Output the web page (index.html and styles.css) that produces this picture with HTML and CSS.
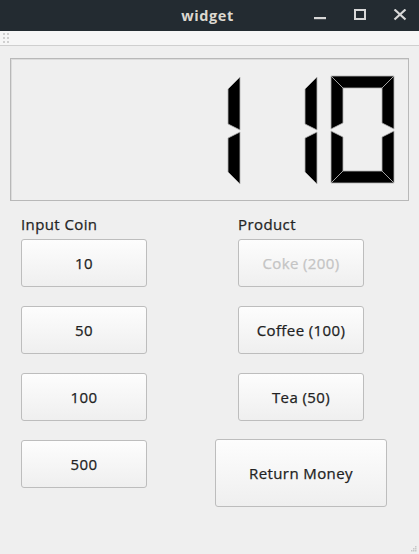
FILE: index.html
```html
<!DOCTYPE html>
<html>
<head>
<meta charset="utf-8">
<link rel="stylesheet" href="styles.css">
</head>
<body>
<div class="window">
  <div class="titlebar">
    <span class="title">widget</span>
    <div class="controls">
      <svg class="ctl" width="14" height="14" viewBox="0 0 14 14"><rect x="1" y="8" width="12" height="2.2" fill="#d8d8d8"/></svg>
      <svg class="ctl" width="14" height="14" viewBox="0 0 14 14"><rect x="2" y="1" width="10" height="9" fill="none" stroke="#d8d8d8" stroke-width="2"/></svg>
      <svg class="ctl" width="14" height="14" viewBox="0 0 14 14"><path d="M1.5 0.5 L12.5 10.5 M12.5 0.5 L1.5 10.5" stroke="#d8d8d8" stroke-width="2.2"/></svg>
    </div>
  </div>
  <div class="toolbar">
    <svg class="grip" width="6" height="15" viewBox="0 0 6 15">
      <g fill="#d0d0d0">
        <rect x="0" y="2" width="2" height="2"/><rect x="4" y="2" width="2" height="2"/>
        <rect x="0" y="6" width="2" height="2"/><rect x="4" y="6" width="2" height="2"/>
        <rect x="0" y="10" width="2" height="2"/><rect x="4" y="10" width="2" height="2"/>
      </g>
    </svg>
  </div>
  <div class="content">
    <div class="lcd">
      <svg width="397" height="141" viewBox="0 0 397 141">
        <defs>
          <g id="sr">
            <polygon points="63,0 63,53 51,47 51,12"/>
            <polygon points="63,55 63,107 51,95 51,61"/>
          </g>
          <g id="s0">
            <polygon points="0,0 63,0 51,12 12,12"/>
            <polygon points="0,0 12,12 12,47 0,53"/>
            <polygon points="0,55 12,61 12,95 0,107"/>
            <polygon points="0,107 12,95 51,95 63,107"/>
            <use href="#sr"/>
          </g>
        </defs>
        <g fill="#000" stroke="#b4b4b4" stroke-width="0.8">
          <use href="#sr" transform="translate(166,18)"/>
          <use href="#sr" transform="translate(243,18)"/>
          <use href="#s0" transform="translate(320,17)"/>
        </g>
      </svg>
    </div>
    <div class="panel">
      <div class="col col-left">
        <div class="label">Input Coin</div>
        <button class="btn">10</button>
        <button class="btn">50</button>
        <button class="btn">100</button>
        <button class="btn">500</button>
      </div>
      <div class="col col-right">
        <div class="label">Product</div>
        <button class="btn" disabled>Coke (200)</button>
        <button class="btn">Coffee (100)</button>
        <button class="btn">Tea (50)</button>
        <button class="btn btn-return">Return Money</button>
      </div>
    </div>
    <svg class="sizegrip" width="6" height="6" viewBox="0 0 6 6">
      <g fill="#c8c8c8"><rect x="4" y="0" width="1.5" height="1.5"/><rect x="2" y="2" width="1.5" height="1.5"/><rect x="4" y="2" width="1.5" height="1.5"/><rect x="0" y="4" width="1.5" height="1.5"/><rect x="2" y="4" width="1.5" height="1.5"/><rect x="4" y="4" width="1.5" height="1.5"/></g>
    </svg>
  </div>
</div>
</body>
</html>
```
FILE: styles.css
```css
html, body {
  margin: 0;
  padding: 0;
  background: #efefef;
}
body {
  font-family: "Open Sans", "Noto Sans", sans-serif;
  width: 419px;
  height: 554px;
  overflow: hidden;
}
.window {
  width: 419px;
  height: 554px;
  display: flex;
  flex-direction: column;
  background: #efefef;
}
.titlebar {
  height: 31px;
  background: #232b31;
  position: relative;
  display: flex;
  align-items: center;
  justify-content: center;
}
.title {
  color: #dcd8d0;
  font-weight: bold;
  font-size: 14.5px;
  letter-spacing: 0.6px;
  margin-left: -4px;
}
.controls {
  position: absolute;
  right: 12px;
  top: 9px;
  display: flex;
  gap: 26px;
}
.ctl { display: block; }
.toolbar {
  height: 14px;
  background: #f6f6f6;
  border-bottom: 1px solid #cfcfcf;
  display: flex;
  align-items: center;
  padding-left: 3px;
}
.grip { display: block; }
.content {
  flex: 1;
  position: relative;
  padding: 12px 0 0 10px;
}
.lcd {
  width: 397px;
  height: 141px;
  border: 1px solid #b8b8b8;
  box-shadow: inset 1px 1px 0 #dcdcdc;
  background: #efefef;
}
.lcd svg { display: block; }
.panel {
  display: flex;
  margin-top: 13px;
}
.col {
  display: flex;
  flex-direction: column;
  gap: 19px;
}
.col-left {
  margin-left: 11px;
  width: 217px;
}
.label {
  height: 20px;
  line-height: 20px;
  font-size: 15px;
  font-weight: 500;
  letter-spacing: 0.4px;
  -webkit-text-stroke: 0.25px currentColor;
  color: #242424;
  margin-bottom: -14px;
}
.btn {
  width: 126px;
  height: 48px;
  border: 1px solid #bdbdbd;
  border-radius: 3px;
  background: linear-gradient(#fdfdfd, #efefef);
  font-family: "Open Sans", "Noto Sans", sans-serif;
  font-size: 15px;
  font-weight: 500;
  letter-spacing: 0.4px;
  -webkit-text-stroke: 0.25px currentColor;
  color: #222;
  padding: 0 0 1px 0;
  margin: 0;
}
.btn:disabled {
  color: #c4c4c4;
}
.btn-return {
  width: 172px;
  height: 68px;
  margin-left: -23px;
  margin-top: -1px;
}
.sizegrip {
  position: absolute;
  right: 2px;
  bottom: 2px;
}
```
